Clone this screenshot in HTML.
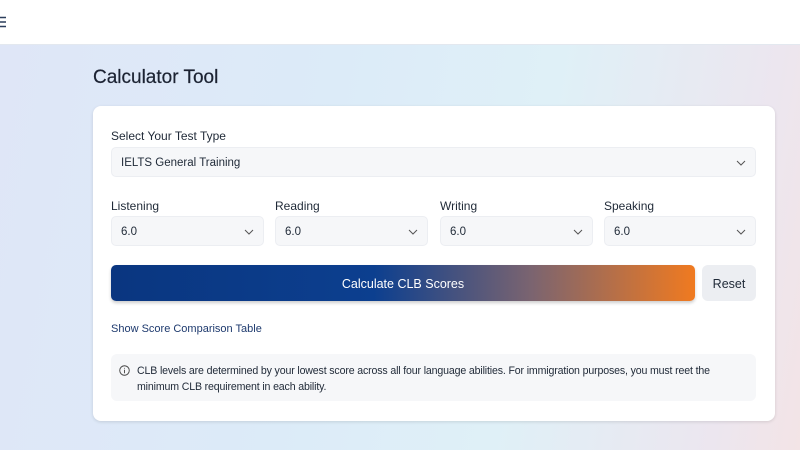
<!DOCTYPE html>
<html><head><meta charset="utf-8"><style>
*{box-sizing:border-box;margin:0;padding:0}
body{width:800px;height:450px;overflow:hidden;font-family:"Liberation Sans",sans-serif;color:#1f2937;
background:linear-gradient(100deg,#dfe6f7 0%,#dcebf8 40%,#dff0f7 65%,#ece6ef 90%,#f3e4e6 100%);position:relative}
.hdr{position:absolute;left:0;top:0;width:800px;height:45px;background:#fff;border-bottom:1px solid #e3e8ef}
.title{position:absolute;left:93px;top:67px;font-size:19px;color:#1c2333;font-weight:500;-webkit-text-stroke:0.2px #1c2333}
.card{position:absolute;left:93px;top:106px;width:682px;height:315px;background:#fff;border-radius:8px;box-shadow:0 1px 3px rgba(0,0,0,.12)}
.lbl{position:absolute;font-size:12px;color:#1f2937}
.sel{position:absolute;height:30px;background:#f6f7f9;border:1px solid #eceef2;border-radius:5px;font-size:11.5px;line-height:31px;padding-left:9px;color:#1f2937}
.sel svg{position:absolute;right:9px;top:12px}
.btn{position:absolute;left:18px;top:159px;width:584px;height:36px;border-radius:5px;
background:linear-gradient(90deg,#0a3680 0%,#0c3f8f 45%,#7b6470 72%,#f07a20 100%);color:#fff;font-size:12.5px;text-align:center;line-height:39px;box-shadow:0 2px 3px rgba(0,0,0,.2)}
.reset{position:absolute;left:609px;top:159px;width:54px;height:36px;border-radius:6px;background:#eceef2;font-size:12.5px;text-align:center;line-height:39px;color:#1f2937}
.link{position:absolute;left:18px;top:217px;font-size:11px;color:#1e3a6e}
.info{position:absolute;left:18px;top:248px;width:645px;height:47px;background:#f6f7f9;border-radius:6px;font-size:10.6px;letter-spacing:-0.15px;line-height:16px;color:#1f2937;padding:9px 8px 0 26px}
.info svg{position:absolute;left:8px;top:11px}
</style></head><body>
<div class="hdr"><svg style="position:absolute;left:-3px;top:15px" width="12" height="14" viewBox="0 0 12 14"><path d="M0 2.5H9M0 7H9M0 11.5H9" stroke="#2c3e5c" stroke-width="1.5"/></svg></div>
<div class="title">Calculator Tool</div>
<div class="card">
<div class="lbl" style="left:18px;top:23px">Select Your Test Type</div>
<div class="sel" style="left:18px;top:41px;width:645px">IELTS General Training<svg width="10" height="6" viewBox="0 0 10 6"><path d="M1 1l4 4 4-4" fill="none" stroke="#555" stroke-width="1"/></svg></div>
<div class="lbl" style="left:18px;top:93px">Listening</div>
<div class="lbl" style="left:182px;top:93px">Reading</div>
<div class="lbl" style="left:347px;top:93px">Writing</div>
<div class="lbl" style="left:511px;top:93px">Speaking</div>
<div class="sel" style="left:18px;top:110px;width:153px">6.0<svg width="10" height="6" viewBox="0 0 10 6"><path d="M1 1l4 4 4-4" fill="none" stroke="#555" stroke-width="1"/></svg></div>
<div class="sel" style="left:182px;top:110px;width:153px">6.0<svg width="10" height="6" viewBox="0 0 10 6"><path d="M1 1l4 4 4-4" fill="none" stroke="#555" stroke-width="1"/></svg></div>
<div class="sel" style="left:347px;top:110px;width:153px">6.0<svg width="10" height="6" viewBox="0 0 10 6"><path d="M1 1l4 4 4-4" fill="none" stroke="#555" stroke-width="1"/></svg></div>
<div class="sel" style="left:511px;top:110px;width:152px">6.0<svg width="10" height="6" viewBox="0 0 10 6"><path d="M1 1l4 4 4-4" fill="none" stroke="#555" stroke-width="1"/></svg></div>
<div class="btn">Calculate CLB Scores</div>
<div class="reset">Reset</div>
<div class="link">Show Score Comparison Table</div>
<div class="info"><svg width="11" height="11" viewBox="0 0 12 12"><circle cx="6" cy="6" r="5.2" fill="none" stroke="#444" stroke-width="1"/><path d="M6 5.2V9M6 3.2v.8" stroke="#444" stroke-width="1"/></svg>CLB levels are determined by your lowest score across all four language abilities. For immigration purposes, you must reet the minimum CLB requirement in each ability.</div>
</div>
</body></html>
